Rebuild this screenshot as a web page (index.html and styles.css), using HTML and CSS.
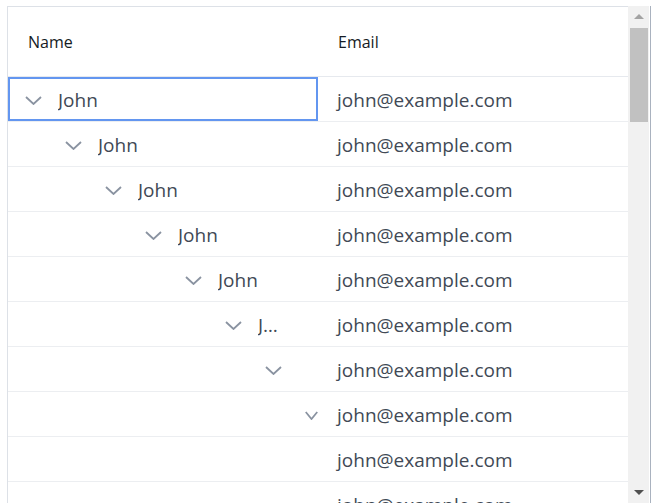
FILE: index.html
```html
<!DOCTYPE html>
<html>
<head>
<meta charset="utf-8">
<link rel="stylesheet" href="styles.css">
</head>
<body>
<div class="frame">
  <div class="grid">
    <div class="header">
      <div class="hcell name-col">Name</div>
      <div class="hcell email-col">Email</div>
    </div>
    <div class="row">
      <div class="cell name-col tree focused">
        <span class="indent l0"></span>
        <svg class="chev" viewBox="0 0 17 9" preserveAspectRatio="none"><path d="M1 1 L8.5 8 L16 1"/></svg>
        <span class="label">John</span>
      </div>
      <div class="cell email-col">john@example.com</div>
    </div>
    <div class="row">
      <div class="cell name-col tree">
        <span class="indent l1"></span>
        <svg class="chev" viewBox="0 0 17 9" preserveAspectRatio="none"><path d="M1 1 L8.5 8 L16 1"/></svg>
        <span class="label">John</span>
      </div>
      <div class="cell email-col">john@example.com</div>
    </div>
    <div class="row">
      <div class="cell name-col tree">
        <span class="indent l2"></span>
        <svg class="chev" viewBox="0 0 17 9" preserveAspectRatio="none"><path d="M1 1 L8.5 8 L16 1"/></svg>
        <span class="label">John</span>
      </div>
      <div class="cell email-col">john@example.com</div>
    </div>
    <div class="row">
      <div class="cell name-col tree">
        <span class="indent l3"></span>
        <svg class="chev" viewBox="0 0 17 9" preserveAspectRatio="none"><path d="M1 1 L8.5 8 L16 1"/></svg>
        <span class="label">John</span>
      </div>
      <div class="cell email-col">john@example.com</div>
    </div>
    <div class="row">
      <div class="cell name-col tree">
        <span class="indent l4"></span>
        <svg class="chev" viewBox="0 0 17 9" preserveAspectRatio="none"><path d="M1 1 L8.5 8 L16 1"/></svg>
        <span class="label">John</span>
      </div>
      <div class="cell email-col">john@example.com</div>
    </div>
    <div class="row">
      <div class="cell name-col tree">
        <span class="indent l5"></span>
        <svg class="chev" viewBox="0 0 17 9" preserveAspectRatio="none"><path d="M1 1 L8.5 8 L16 1"/></svg>
        <span class="label">John</span>
      </div>
      <div class="cell email-col">john@example.com</div>
    </div>
    <div class="row">
      <div class="cell name-col tree">
        <span class="indent l6"></span>
        <svg class="chev" viewBox="0 0 17 9" preserveAspectRatio="none"><path d="M1 1 L8.5 8 L16 1"/></svg>
        <span class="label">John</span>
      </div>
      <div class="cell email-col">john@example.com</div>
    </div>
    <div class="row">
      <div class="cell name-col tree">
        <span class="indent l7"></span>
        <svg class="chev squeezed" viewBox="0 0 17 9" preserveAspectRatio="none"><path d="M1 1 L8.5 8 L16 1"/></svg>
      </div>
      <div class="cell email-col">john@example.com</div>
    </div>
    <div class="row">
      <div class="cell name-col tree"></div>
      <div class="cell email-col">john@example.com</div>
    </div>
    <div class="row">
      <div class="cell name-col tree"></div>
      <div class="cell email-col">john@example.com</div>
    </div>
  </div>
  <div class="scrollbar">
    <div class="sb-btn"><span class="arrow-up"></span></div>
    <div class="sb-thumb"></div>
    <div class="sb-track"></div>
    <div class="sb-btn"><span class="arrow-down"></span></div>
  </div>
</div>
</body>
</html>
```

FILE: styles.css
```css
html, body {
  margin: 0;
  padding: 0;
  height: 503px;
  overflow: hidden;
  background: #ffffff;
}

body {
  font-family: "Open Sans", "Noto Sans", sans-serif;
}

.frame {
  display: flex;
  width: 644px;
  height: 497px;
  margin: 6px 0 0 7px;
  border-right: 1px solid #a9b2bf;
  box-sizing: border-box;
}

.grid {
  width: 621px;
  flex: 0 0 621px;
  border-left: 1px solid #dde1e7;
  border-top: 1px solid #dde1e7;
  box-sizing: border-box;
  overflow: hidden;
}

.header {
  display: flex;
  height: 70px;
  border-bottom: 1px solid #e6e9ee;
  box-sizing: border-box;
}

.hcell {
  display: flex;
  align-items: center;
  font-size: 16px;
  font-weight: 500;
  color: #151b24;
  padding-left: 20px;
  box-sizing: border-box;
}

.name-col {
  width: 310px;
  flex: 0 0 310px;
}

.email-col {
  flex: 1 1 auto;
}

.row {
  display: flex;
  height: 45px;
  border-bottom: 1px solid #eceef1;
  box-sizing: border-box;
}

.cell {
  display: flex;
  align-items: center;
  padding-top: 2px;
  font-size: 19px;
  color: #414955;
  box-sizing: border-box;
  overflow: hidden;
  white-space: nowrap;
}

.email-col.cell {
  padding-left: 19px;
}

.tree {
  padding-left: 17px;
  padding-right: 32px;
}

.focused {
  outline: 2px solid #6396f0;
  outline-offset: -2px;
}

.indent { flex: 0 0 auto; height: 1px; }
.l0 { width: 0; }
.l1 { width: 40px; }
.l2 { width: 80px; }
.l3 { width: 120px; }
.l4 { width: 160px; }
.l5 { width: 200px; }
.l6 { width: 240px; }
.l7 { width: 280px; }

.chev {
  flex: 0 0 17px;
  width: 17px;
  height: 9px;
  margin-right: 16px;
}

.chev.squeezed {
  flex: 0 0 13px;
  width: 13px;
}

.chev path {
  fill: none;
  stroke: #8a93a1;
  stroke-width: 1.8;
  vector-effect: non-scaling-stroke;
}

.label {
  flex: 0 1 auto;
  min-width: 0;
  overflow: hidden;
  text-overflow: ellipsis;
}

.scrollbar {
  width: 21px;
  flex: 0 0 21px;
  background: #f1f1f1;
  display: flex;
  flex-direction: column;
}

.sb-btn {
  height: 21px;
  flex: 0 0 21px;
  display: flex;
  align-items: center;
  justify-content: center;
}

.sb-thumb {
  height: 94px;
  margin: 1px 1px 0 2px;
  background: #c1c1c1;
}

.sb-track {
  flex: 1 1 auto;
}

.arrow-up {
  width: 0;
  height: 0;
  border-left: 5px solid transparent;
  border-right: 5px solid transparent;
  border-bottom: 5px solid #a3a3a3;
}

.arrow-down {
  width: 0;
  height: 0;
  border-left: 5px solid transparent;
  border-right: 5px solid transparent;
  border-top: 5px solid #505050;
}
```
